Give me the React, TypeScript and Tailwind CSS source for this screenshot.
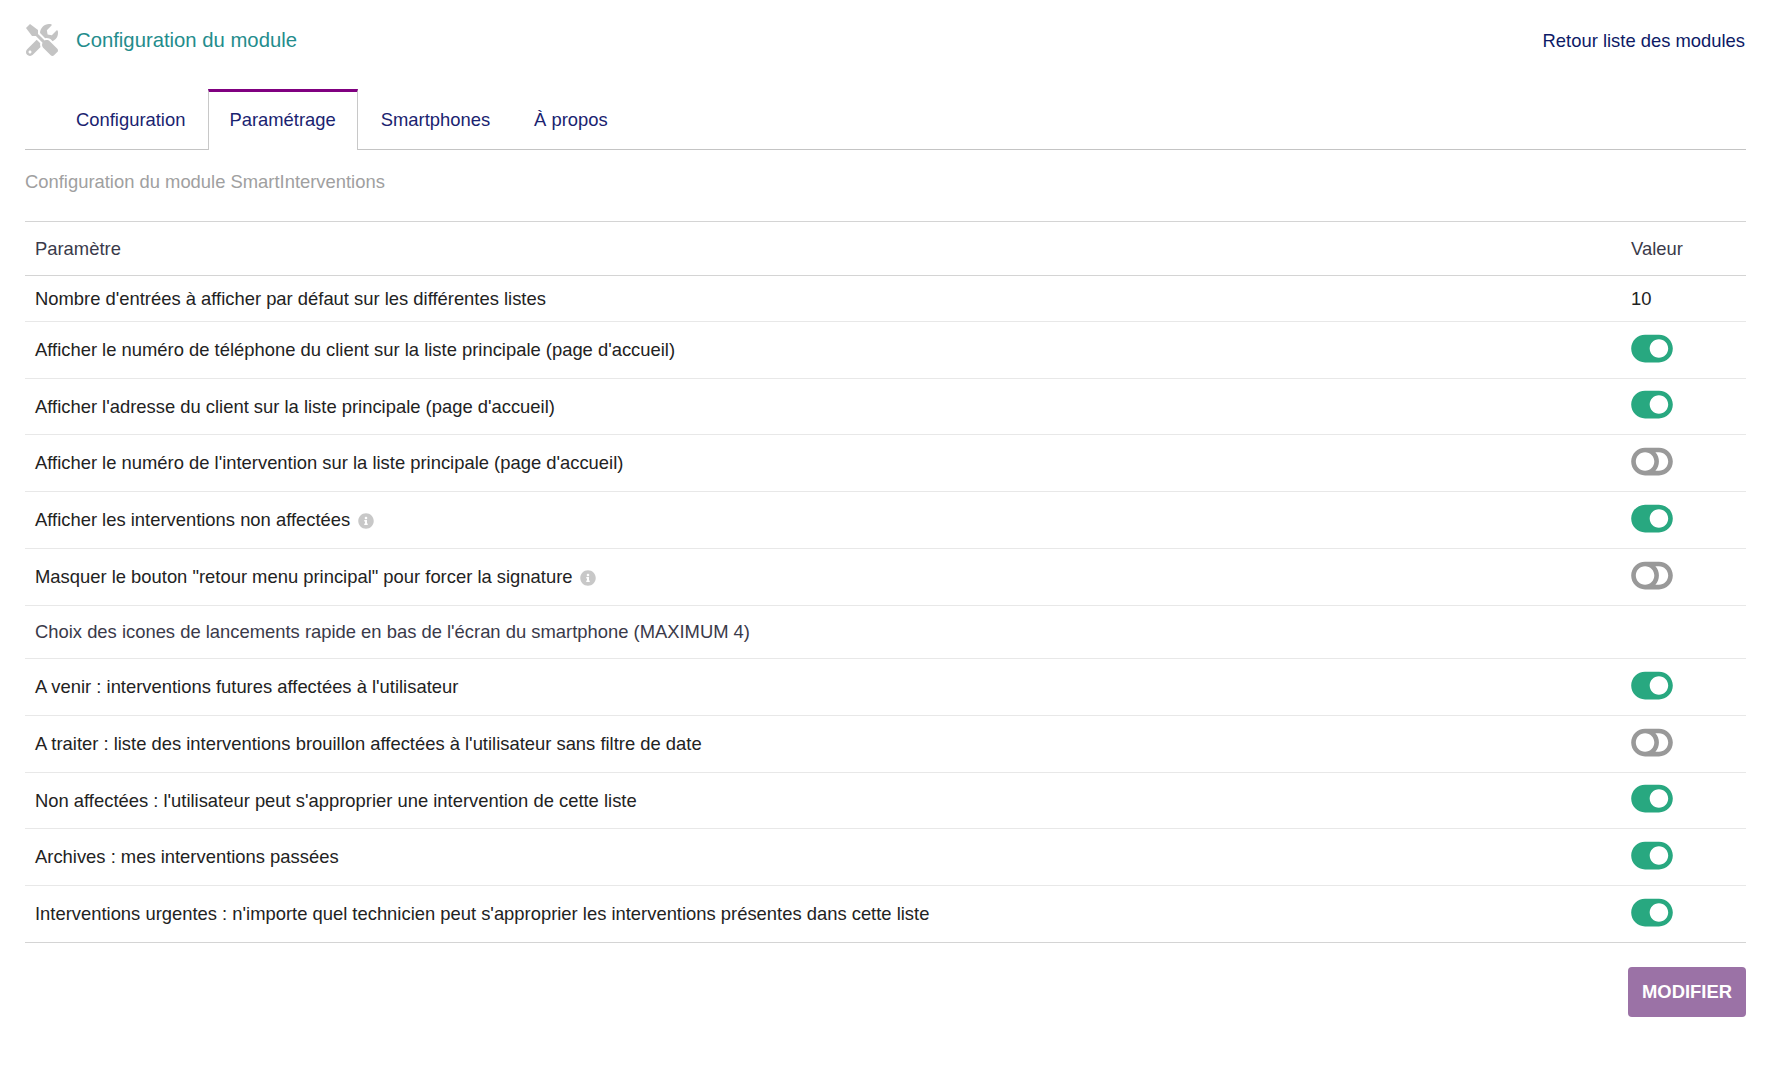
import { FaTools, FaToggleOn, FaToggleOff, FaInfoCircle } from "react-icons/fa";

type Row = { t: string; h: string; on?: boolean; info?: boolean; val?: string; sub?: boolean };

const rows: Row[] = [
  { t: "Nombre d'entrées à afficher par défaut sur les différentes listes", h: "h-[46px]", val: "10" },
  { t: "Afficher le numéro de téléphone du client sur la liste principale (page d'accueil)", h: "h-[57px]", on: true },
  { t: "Afficher l'adresse du client sur la liste principale (page d'accueil)", h: "h-[56px]", on: true },
  { t: "Afficher le numéro de l'intervention sur la liste principale (page d'accueil)", h: "h-[57px]", on: false },
  { t: "Afficher les interventions non affectées", h: "h-[57px]", on: true, info: true },
  { t: "Masquer le bouton \"retour menu principal\" pour forcer la signature", h: "h-[57px]", on: false, info: true },
  { t: "Choix des icones de lancements rapide en bas de l'écran du smartphone (MAXIMUM 4)", h: "h-[53px]", sub: true },
  { t: "A venir : interventions futures affectées à l'utilisateur", h: "h-[57px]", on: true },
  { t: "A traiter : liste des interventions brouillon affectées à l'utilisateur sans filtre de date", h: "h-[57px]", on: false },
  { t: "Non affectées : l'utilisateur peut s'approprier une intervention de cette liste", h: "h-[56px]", on: true },
  { t: "Archives : mes interventions passées", h: "h-[57px]", on: true },
  { t: "Interventions urgentes : n'importe quel technicien peut s'approprier les interventions présentes dans cette liste", h: "h-[56px]", on: true },
];

export default function App() {
  return (
    <div className="min-h-screen bg-white px-[25px] pr-[26px] font-['Liberation_Sans',Arial,sans-serif] text-[18.4px] text-[#222222]">
      <div className="flex h-[80px] items-center justify-between">
        <div className="flex items-center">
          <FaTools className="ml-[1px] h-[32px] w-[32px] text-[#c4c4c4]" />
          <span className="ml-[18px] text-[20.3px] text-[#238c8c]">Configuration du module</span>
        </div>
        <a className="mr-[1px] pt-[1px] text-[#0d1a66]">Retour liste des modules</a>
      </div>

      <div className="mt-[9px] flex h-[61px] items-stretch border-b border-[#c4c4c4] text-[#1a2370]">
        <div className="flex items-center pb-[2px] pl-[51px] pr-[23px] pt-[4px]">Configuration</div>
        <div className="mb-[-1px] flex items-center border-x border-t-[3px] border-x-[#c8c8c8] border-t-[#800080] bg-white pb-[3px] pl-[20px] pr-[21px]">Paramétrage</div>
        <div className="flex items-center pb-[2px] pl-[23px] pr-[22px] pt-[4px]">Smartphones</div>
        <div className="flex items-center pb-[2px] pl-[22px] pt-[4px]">À propos</div>
      </div>

      <div className="flex h-[71px] items-center pb-[7px] text-[#a0a0a0]">Configuration du module SmartInterventions</div>

      <div className="border-y border-[#d4d4d4]">
        <div className="flex h-[54px] items-center border-b border-[#d4d4d4] pl-[10px] text-[#3a3a4a]">
          <span className="flex-1">Paramètre</span>
          <span className="w-[115px]">Valeur</span>
        </div>
        {rows.map((r, i) => (
          <div key={i} className={`flex items-center pl-[10px] ${r.h} ${i < rows.length - 1 ? "border-b border-[#e8e8e8]" : ""}`}>
            <span className={`flex flex-1 items-center ${r.sub ? "text-[#3a3a4a]" : ""}`}>
              {r.t}
              {r.info && <FaInfoCircle className="ml-[8px] mt-[3px] h-[16px] w-[16px] text-[#c8c8c8]" />}
            </span>
            <span className="flex w-[115px] items-center">
              {r.val}
              {r.on === true && <FaToggleOn className="mt-[-4px] h-[37px] w-[42px] text-[#28a880]" />}
              {r.on === false && <FaToggleOff className="mt-[-4px] h-[37px] w-[42px] text-[#999999]" />}
            </span>
          </div>
        ))}
      </div>

      <div className="mt-[24px] flex justify-end">
        <button className="flex h-[50px] w-[118px] items-center justify-center rounded-[4px] bg-[#9b72a6] font-bold text-white">MODIFIER</button>
      </div>
    </div>
  );
}
